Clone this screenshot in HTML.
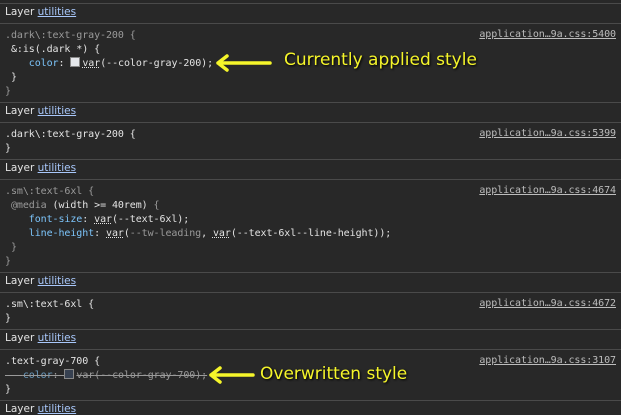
<!DOCTYPE html><html><head><meta charset="utf-8"><style>
body{margin:0;width:621px;height:415px;background:#282828;overflow:hidden;position:relative;font-family:"DejaVu Sans Mono","Liberation Mono",monospace;font-size:10px;color:#e3e3e3}
.l{position:absolute;left:0;width:621px;height:1px;background:#4a4a4a}
.h{position:absolute;left:5px;font-family:"DejaVu Sans","Liberation Sans",sans-serif;font-size:10.5px;color:#e3e3e3}
.h u{color:#a8c7fa}
.c{position:absolute;left:5px;white-space:pre;line-height:14px;letter-spacing:-0.08px}
.d{color:#9a9a9a}
.p{color:#7cc4fa}
.f{position:absolute;right:5px;color:#bdbdbd;text-decoration:underline;letter-spacing:-0.08px}
.v{text-decoration:underline dotted}
.sw{display:inline-block;width:8px;height:8px;border:1px solid #888;vertical-align:-1px;margin-right:2px}
.a{position:absolute;font-family:"DejaVu Sans","Liberation Sans",sans-serif;font-size:17px;color:#f5f52a;text-shadow:1px 1px 2px #000}
</style></head><body>
<div class="l" style="top:3px"></div>
<div class="h" style="top:6px">Layer <u>utilities</u></div>
<div class="l" style="top:23px"></div>
<div class="f" style="top:29px">application…9a.css:5400</div>
<div class="c" style="top:29px"><span class="d">.dark\:text-gray-200 {</span>
 &amp;:is(.dark *) {
    <span class="p">color</span>: <span class="sw" style="background:#e5e7eb"></span><span class="v">var</span>(--color-gray-200);
 }
<span class="d">}</span></div>
<div class="l" style="top:102px"></div>
<div class="h" style="top:105px">Layer <u>utilities</u></div>
<div class="l" style="top:122px"></div>
<div class="f" style="top:128px">application…9a.css:5399</div>
<div class="c" style="top:128px">.dark\:text-gray-200 {
}</div>
<div class="l" style="top:159px"></div>
<div class="h" style="top:162px">Layer <u>utilities</u></div>
<div class="l" style="top:179px"></div>
<div class="f" style="top:185px">application…9a.css:4674</div>
<div class="c" style="top:185px"><span class="d">.sm\:text-6xl {</span>
 <span class="d">@media</span> (width &gt;= 40rem) <span class="d">{</span>
    <span class="p">font-size</span>: <span class="v">var</span>(--text-6xl);
    <span class="p">line-height</span>: <span class="v">var</span>(<span class="d">--tw-leading</span>, <span class="v">var</span>(--text-6xl--line-height));
 <span class="d">}</span>
<span class="d">}</span></div>
<div class="l" style="top:272px"></div>
<div class="h" style="top:275px">Layer <u>utilities</u></div>
<div class="l" style="top:292px"></div>
<div class="f" style="top:298px">application…9a.css:4672</div>
<div class="c" style="top:298px">.sm\:text-6xl {
}</div>
<div class="l" style="top:329px"></div>
<div class="h" style="top:332px">Layer <u>utilities</u></div>
<div class="l" style="top:349px"></div>
<div class="f" style="top:355px">application…9a.css:3107</div>
<div class="c" style="top:355px">.text-gray-700 {
<span style="text-decoration:line-through;color:#9a9a9a">   <span class="p" style="color:#6a9bbf">color</span>: <span class="sw" style="background:#374151"></span><span>var</span>(--color-gray-700);</span>
}</div>
<div class="l" style="top:400px"></div>
<div class="h" style="top:403px">Layer <u>utilities</u></div>
<svg style="position:absolute;left:214px;top:54px" width="60" height="20"><path d="M4 9H56M13 2L4 9L13 16" stroke="#f5f52a" stroke-width="3.5" fill="none" stroke-linejoin="round" stroke-linecap="round"/></svg>
<div class="a" style="left:284px;top:50px">Currently applied style</div>
<svg style="position:absolute;left:207px;top:366px" width="50" height="20"><path d="M4 9H46M13 2L4 9L13 16" stroke="#f5f52a" stroke-width="3.5" fill="none" stroke-linejoin="round" stroke-linecap="round"/></svg>
<div class="a" style="left:260px;top:364px">Overwritten style</div>
</body></html>
